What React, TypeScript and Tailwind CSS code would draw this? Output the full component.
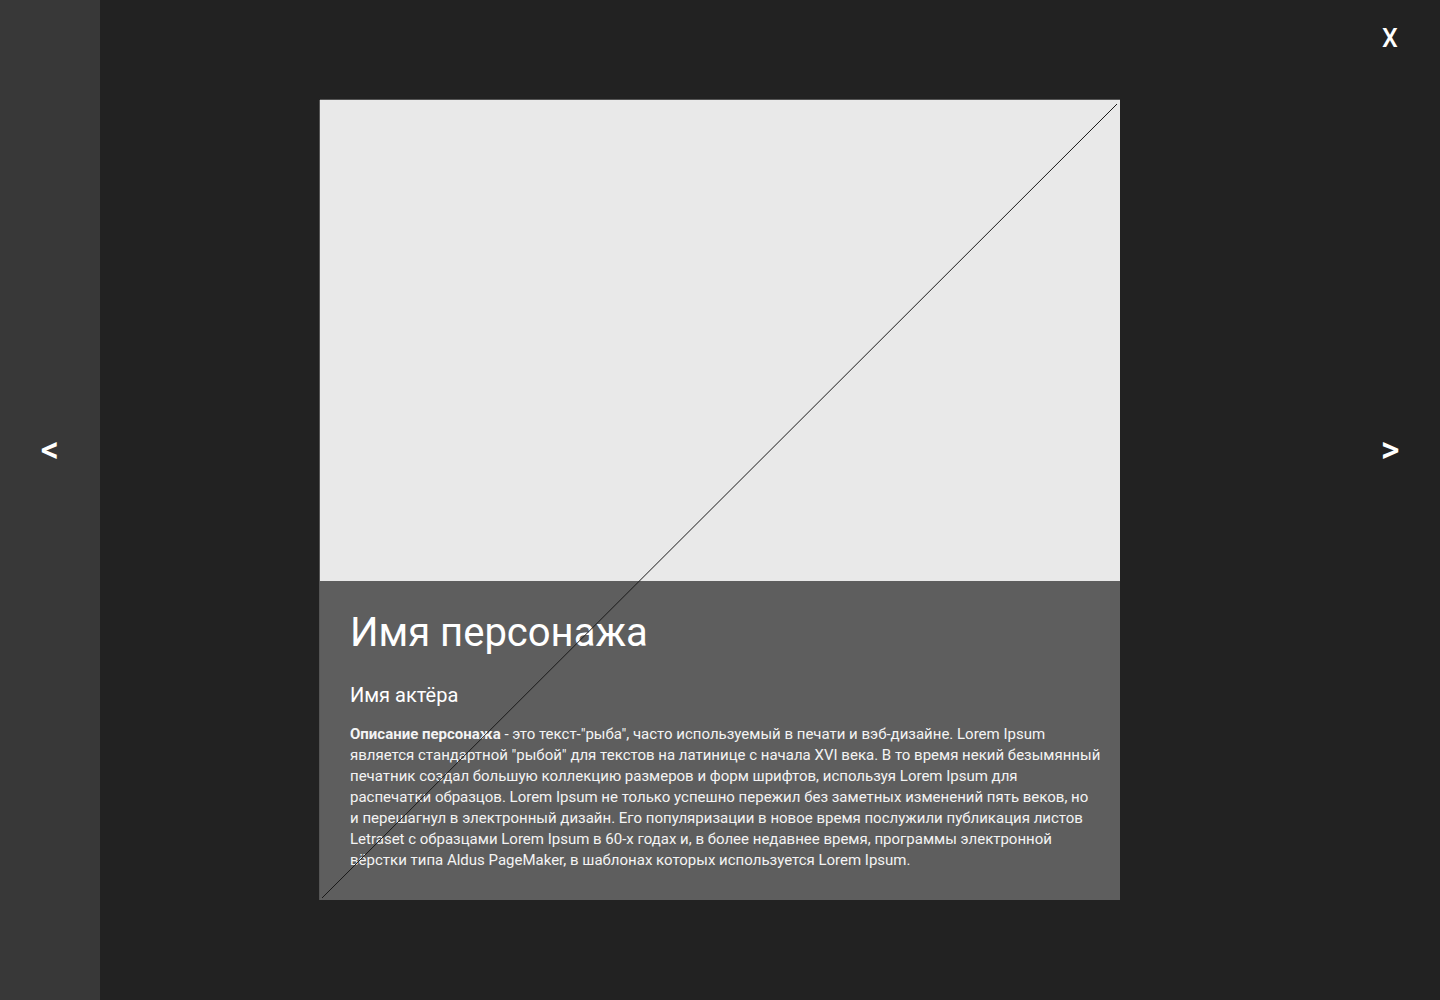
import React from 'react';

export default function App() {
  return (
    <div
      className="w-[1440px] h-[1000px] flex bg-[#222222] text-white overflow-hidden"
      style={{ fontFamily: 'Roboto, "Noto Sans", sans-serif' }}
    >
      <button className="w-[100px] h-full bg-[#383838] flex items-center justify-center pb-[100px] text-[36px] font-medium leading-none text-white">
        &lt;
      </button>

      <div className="flex-1 flex items-center justify-center">
        <div className="relative w-[800px] h-[800px] flex flex-col shadow-[0_-1px_0_#555555,-1px_0_0_#555555]">
          <div className="h-[481px] bg-[#e9e9e9]" />
          <div className="flex-1 bg-[#5e5e5e] pl-[30px] pr-[18px] pt-[27px]">
            <h1 className="text-[40px] leading-[50px] font-normal text-white">Имя персонажа</h1>
            <h2 className="mt-[25px] text-[20px] leading-[24px] font-normal text-white">Имя актёра</h2>
            <p className="mt-[17px] text-[15px] leading-[21px] text-[#f4f4f4] font-normal">
              <b className="font-bold">Описание персонажа</b> - это текст-"рыба", часто используемый в печати и вэб-дизайне. Lorem Ipsum является стандартной "рыбой" для текстов на латинице с начала XVI века. В то время некий безымянный печатник создал большую коллекцию размеров и форм шрифтов, используя Lorem Ipsum для распечатки образцов. Lorem Ipsum не только успешно пережил без заметных изменений пять веков, но и{'\u00a0'}перешагнул в электронный дизайн. Его популяризации в новое время послужили публикация листов Letraset с образцами Lorem Ipsum в 60-х годах и, в более недавнее время, программы электронной вёрстки типа Aldus PageMaker, в шаблонах которых используется Lorem Ipsum.
            </p>
          </div>
          <svg className="absolute inset-0 pointer-events-none" width="800" height="800" viewBox="0 0 800 800">
            <line x1="2" y1="798" x2="797" y2="4" stroke="#1a1a1a" strokeWidth="1" />
          </svg>
        </div>
      </div>

      <div className="w-[100px] h-full flex flex-col items-center">
        <button className="mt-[24px] text-[25px] leading-[30px] font-medium text-white">X</button>
        <div className="flex-1 flex items-center justify-center pb-[154px]">
          <button className="text-[36px] font-medium leading-none text-white">&gt;</button>
        </div>
      </div>
    </div>
  );
}
